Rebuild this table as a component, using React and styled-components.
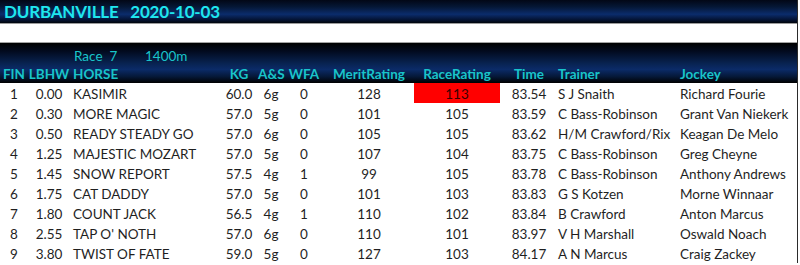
import React from "react";
import styled, { createGlobalStyle } from "styled-components";

const GlobalStyle = createGlobalStyle`
  html, body { margin: 0; padding: 0; background: #ffffff; }
  body { font-family: Lato, "Open Sans", sans-serif; }
`;

const COLS = "28px 42px 150px 38px 26px 40px 90px 86px 58px 122px 1fr";

const Page = styled.div`
  width: 797px;
  border-right: 1px solid #2b2b2b;
  background: #ffffff;
`;

const TitleBar = styled.div`
  height: 24px;
  box-sizing: border-box;
  padding-left: 4px;
  display: flex;
  align-items: center;
  background: linear-gradient(to bottom, #020716 0%, #051736 30%, #0b2c6c 62%, #041333 86%, #00040c 100%);
  border-bottom: 1px solid #9b9b9b;
`;

const Title = styled.h1`
  margin: 0;
  font-size: 17px;
  font-weight: 700;
  color: #1fe6ee;
  white-space: pre;
  letter-spacing: -0.2px;
`;

const Spacer = styled.div`
  height: 18px;
  border-bottom: 1px solid #a3a3a3;
`;

const HeaderBlock = styled.div`
  height: 40px;
  box-sizing: border-box;
  padding-top: 4px;
  background: linear-gradient(to bottom, #000000 0%, #020a1e 20%, #08224f 50%, #0b2b68 66%, #051838 84%, #000000 100%);
  color: #19c4ca;
`;

const Row = styled.div`
  display: grid;
  grid-template-columns: ${COLS};
  height: ${(p) => p.$h || 20}px;
  box-sizing: border-box;
  padding-top: ${(p) => p.$top || 0}px;
  font-size: 13.5px;
  line-height: ${(p) => (p.$h || 20) - (p.$top || 0)}px;
`;

const RaceLine = styled.div`
  height: 19px;
  line-height: 19px;
  display: flex;
  align-items: center;
  padding-left: 74px;
  font-size: 13.5px;
`;

const RaceNo = styled.span`
  white-space: pre;
  width: 71px;
`;

const Cell = styled.div`
  text-align: ${(p) => p.$align || "center"};
  padding-left: ${(p) => p.$pad || 0}px;
  white-space: nowrap;
  overflow: visible;
`;

const HotCell = styled(Cell)`
  background: #ff0000;
  color: #3a0000;
  margin-top: ${(p) => -p.$top}px;
  padding-top: ${(p) => p.$top}px;
`;

const HeadRow = styled(Row)`
  font-weight: 700;
  color: #19c4ca;
`;

const DataRow = styled(Row)`
  color: #1f1f1f;
`;

const columns = [
  { key: "fin", label: "FIN" },
  { key: "lbhw", label: "LBHW" },
  { key: "horse", label: "HORSE", align: "left", pad: 3 },
  { key: "kg", label: "KG" },
  { key: "as", label: "A&S" },
  { key: "wfa", label: "WFA" },
  { key: "merit", label: "MeritRating" },
  { key: "race", label: "RaceRating" },
  { key: "time", label: "Time" },
  { key: "trainer", label: "Trainer", align: "left" },
  { key: "jockey", label: "Jockey", align: "left" },
];

const rows = [
  ["1", "0.00", "KASIMIR", "60.0", "6g", "0", "128", "113", "83.54", "S J Snaith", "Richard Fourie"],
  ["2", "0.30", "MORE MAGIC", "57.0", "5g", "0", "101", "105", "83.59", "C Bass-Robinson", "Grant Van Niekerk"],
  ["3", "0.50", "READY STEADY GO", "57.0", "6g", "0", "105", "105", "83.62", "H/M Crawford/Rix", "Keagan De Melo"],
  ["4", "1.25", "MAJESTIC MOZART", "57.0", "5g", "0", "107", "104", "83.75", "C Bass-Robinson", "Greg Cheyne"],
  ["5", "1.45", "SNOW REPORT", "57.5", "4g", "1", "99", "105", "83.78", "C Bass-Robinson", "Anthony Andrews"],
  ["6", "1.75", "CAT DADDY", "57.0", "5g", "0", "101", "103", "83.83", "G S Kotzen", "Morne Winnaar"],
  ["7", "1.80", "COUNT JACK", "56.5", "4g", "1", "110", "102", "83.84", "B Crawford", "Anton Marcus"],
  ["8", "2.55", "TAP O' NOTH", "57.0", "6g", "0", "110", "101", "83.97", "V H Marshall", "Oswald Noach"],
  ["9", "3.80", "TWIST OF FATE", "59.0", "5g", "0", "127", "103", "84.17", "A N Marcus", "Craig Zackey"],
];

const DATA_TOP = 2;

export default function App() {
  return (
    <>
      <GlobalStyle />
      <Page>
        <TitleBar>
          <Title>{"DURBANVILLE   2020-10-03"}</Title>
        </TitleBar>
        <Spacer />
        <HeaderBlock>
          <RaceLine>
            <RaceNo>{"Race  7"}</RaceNo>
            <span>1400m</span>
          </RaceLine>
          <HeadRow $h={17}>
            {columns.map((c) => (
              <Cell key={c.key} $align={c.align} $pad={c.pad}>
                {c.label}
              </Cell>
            ))}
          </HeadRow>
        </HeaderBlock>
        {rows.map((r, i) => (
          <DataRow key={i} $top={DATA_TOP}>
            {columns.map((c, j) =>
              c.key === "race" && r[j] === "113" ? (
                <HotCell key={c.key} $top={DATA_TOP}>
                  {r[j]}
                </HotCell>
              ) : (
                <Cell key={c.key} $align={c.align} $pad={c.pad}>
                  {r[j]}
                </Cell>
              )
            )}
          </DataRow>
        ))}
      </Page>
    </>
  );
}
